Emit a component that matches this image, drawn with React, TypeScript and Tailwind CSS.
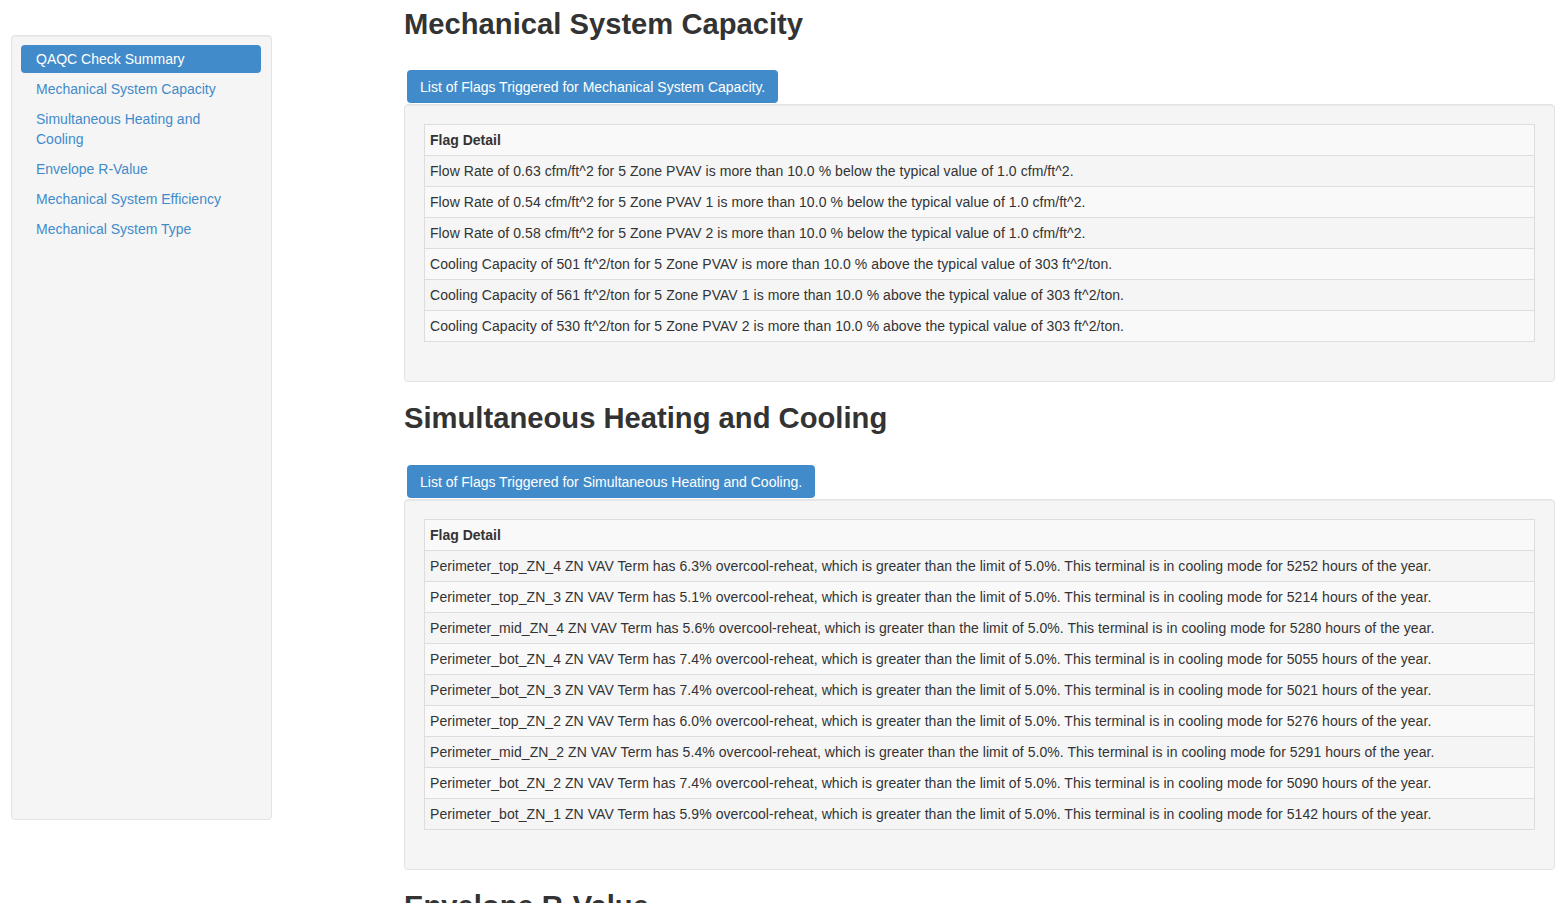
import React from "react";

const navItems = [
  "QAQC Check Summary",
  "Mechanical System Capacity",
  "Simultaneous Heating and Cooling",
  "Envelope R-Value",
  "Mechanical System Efficiency",
  "Mechanical System Type",
];

const capacityRows = [
  "Flow Rate of 0.63 cfm/ft^2 for 5 Zone PVAV is more than 10.0 % below the typical value of 1.0 cfm/ft^2.",
  "Flow Rate of 0.54 cfm/ft^2 for 5 Zone PVAV 1 is more than 10.0 % below the typical value of 1.0 cfm/ft^2.",
  "Flow Rate of 0.58 cfm/ft^2 for 5 Zone PVAV 2 is more than 10.0 % below the typical value of 1.0 cfm/ft^2.",
  "Cooling Capacity of 501 ft^2/ton for 5 Zone PVAV is more than 10.0 % above the typical value of 303 ft^2/ton.",
  "Cooling Capacity of 561 ft^2/ton for 5 Zone PVAV 1 is more than 10.0 % above the typical value of 303 ft^2/ton.",
  "Cooling Capacity of 530 ft^2/ton for 5 Zone PVAV 2 is more than 10.0 % above the typical value of 303 ft^2/ton.",
];

const shcRows: [string, string, string][] = [
  ["Perimeter_top_ZN_4", "6.3", "5252"],
  ["Perimeter_top_ZN_3", "5.1", "5214"],
  ["Perimeter_mid_ZN_4", "5.6", "5280"],
  ["Perimeter_bot_ZN_4", "7.4", "5055"],
  ["Perimeter_bot_ZN_3", "7.4", "5021"],
  ["Perimeter_top_ZN_2", "6.0", "5276"],
  ["Perimeter_mid_ZN_2", "5.4", "5291"],
  ["Perimeter_bot_ZN_2", "7.4", "5090"],
  ["Perimeter_bot_ZN_1", "5.9", "5142"],
];

function FlagTable({ rows }: { rows: string[] }) {
  return (
    <table className="w-full border-collapse border border-[#dddddd] mb-[20px]">
      <tbody>
        <tr className="bg-[#f9f9f9]">
          <td className="border-t border-[#dddddd] px-[5px] py-[5px] font-bold leading-[20px]">Flag Detail</td>
        </tr>
        {rows.map((r, i) => (
          <tr key={i} className={i % 2 === 1 ? "bg-[#f9f9f9]" : ""}>
            <td className="border-t border-[#dddddd] px-[5px] py-[5px] leading-[20px] tracking-[0.06px]">{r}</td>
          </tr>
        ))}
      </tbody>
    </table>
  );
}

function Section({ title, rows, first }: { title: string; rows: string[]; first?: boolean }) {
  return (
    <section>
      <h2 className={`text-[29.2px] font-bold leading-[33px] text-[#333333] ${first ? "" : "mt-[20px]"}`}>{title}</h2>
      <div className={`${first ? "mt-[29px]" : "mt-[30px]"} ml-[3px]`}>
        <span className="inline-block rounded-[4px] bg-[#428bca] px-[13px] py-[6.5px] text-[14px] leading-[20px] text-white">
          List of Flags Triggered for {title}.
        </span>
      </div>
      <div className="mt-[1px] rounded-[4px] border border-[#e3e3e3] bg-[#f5f5f5] p-[19px] shadow-[inset_0_1px_1px_rgba(0,0,0,0.05)]">
        <FlagTable rows={rows} />
      </div>
    </section>
  );
}

export default function App() {
  const shc = shcRows.map(
    ([z, p, h]) =>
      `${z} ZN VAV Term has ${p}% overcool-reheat, which is greater than the limit of 5.0%. This terminal is in cooling mode for ${h} hours of the year.`
  );
  return (
    <div
      className="flex min-h-screen bg-white text-[14px] leading-[20px] text-[#333333]"
      style={{ fontFamily: '"Liberation Sans", Arial, Helvetica, sans-serif' }}
    >
      <aside className="ml-[11px] mt-[35px] h-[785px] w-[261px] shrink-0 rounded-[4px] border border-[#e3e3e3] bg-[#f5f5f5] py-[9px] pl-[9px] pr-[10px] shadow-[inset_0_1px_1px_rgba(0,0,0,0.05)]">
        <ul className="flex flex-col gap-[2px]">
          {navItems.map((item, i) => (
            <li key={item}>
              <a
                className={`block rounded-[4px] px-[15px] py-[4px] leading-[20px] ${
                  i === 0 ? "bg-[#428bca] text-white" : "text-[#428bca]"
                }`}
              >
                {item}
              </a>
            </li>
          ))}
        </ul>
      </aside>
      <main className="ml-[132px] w-[1151px] shrink-0 pt-[8px]">
        <Section title="Mechanical System Capacity" rows={capacityRows} first />
        <Section title="Simultaneous Heating and Cooling" rows={shc} />
        <h2 className="mt-[20px] text-[29.2px] font-bold leading-[33px] text-[#333333]">Envelope R-Value</h2>
      </main>
    </div>
  );
}
